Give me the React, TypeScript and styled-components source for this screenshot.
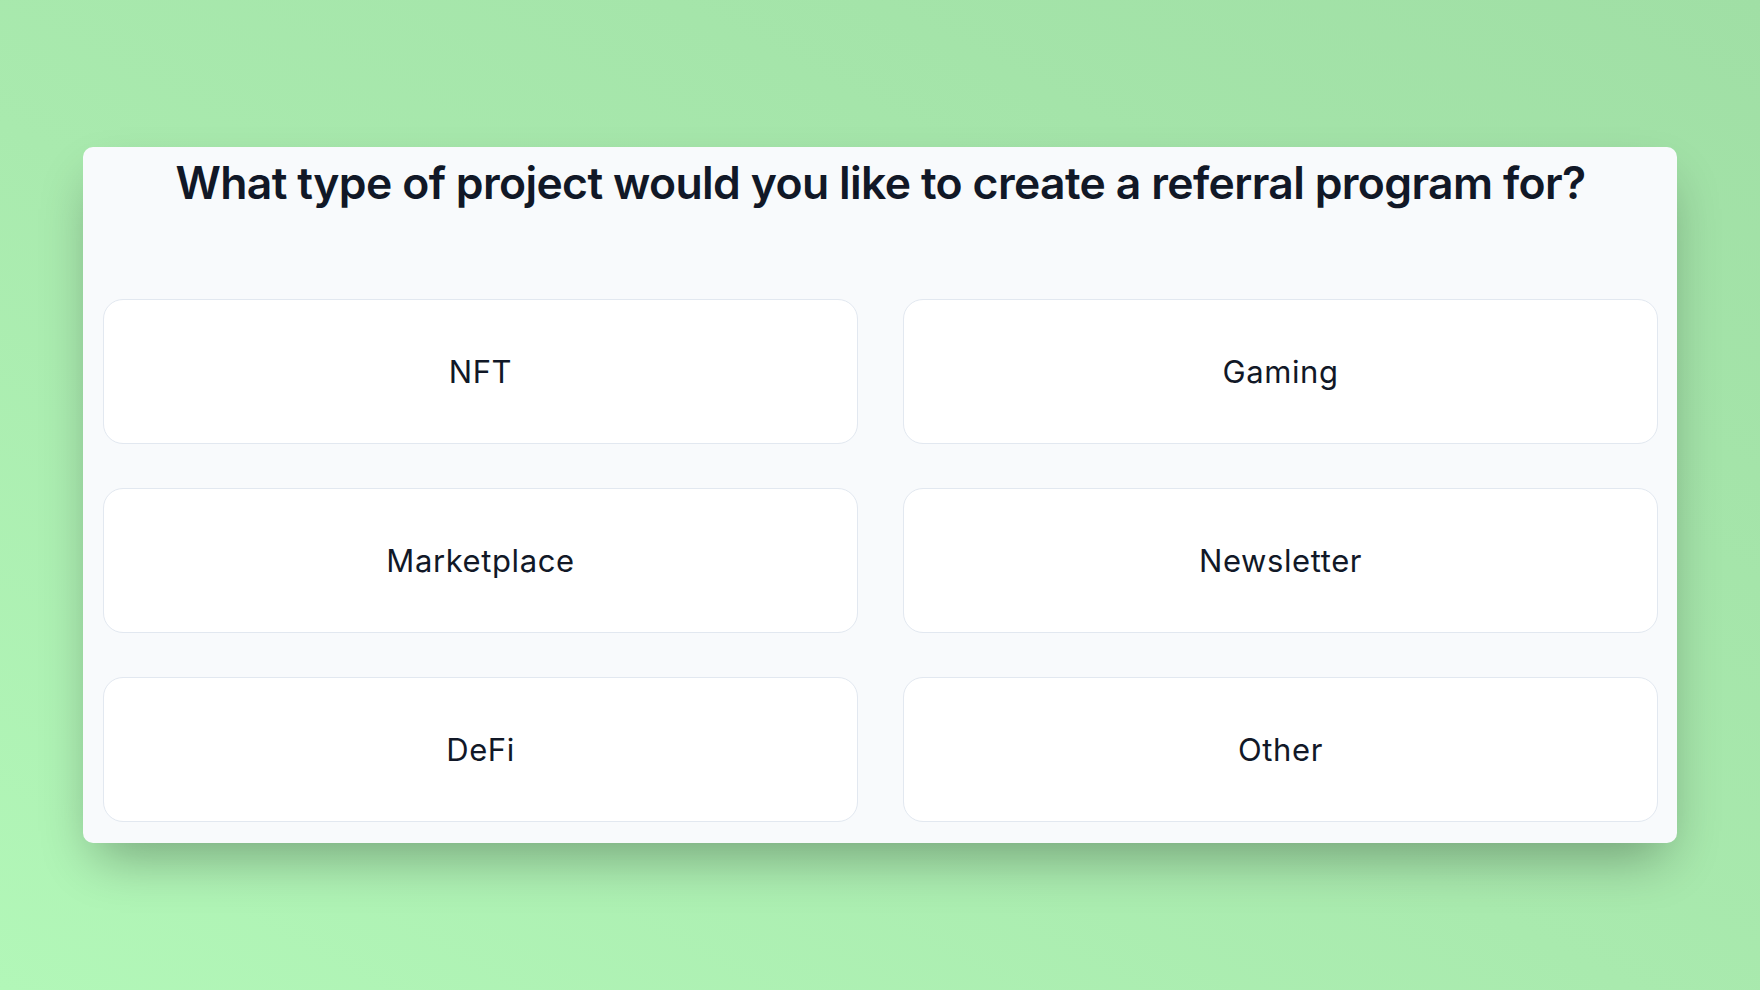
import React from "react";
import styled, { createGlobalStyle } from "styled-components";

const Global = createGlobalStyle`
  html, body { margin: 0; padding: 0; height: 100%; }
  body { font-family: Inter, "Noto Sans", sans-serif; }
  #root { height: 100%; }
  * { box-sizing: border-box; }
`;

const Page = styled.div`
  width: 1760px;
  height: 990px;
  background: linear-gradient(28deg, #b2f7b8 0%, #a9eaae 45%, #a0dfa5 100%);
  padding: 147px 83px 0 83px;
`;

const Card = styled.div`
  width: 1594px;
  height: 696px;
  background: #f8fafc;
  border-radius: 10px;
  box-shadow: 0 25px 50px -12px rgba(0, 0, 0, 0.32);
  padding: 12px 19px 20px 20px;
  display: flex;
  flex-direction: column;
`;

const Title = styled.h1`
  margin: 0 0 92px 0;
  font-family: Inter, "Noto Sans", sans-serif;
  font-size: 44.5px;
  line-height: 48px;
  font-weight: 600;
  color: #111827;
  text-align: center;
  letter-spacing: -0.65px;
`;

const Grid = styled.div`
  display: grid;
  grid-template-columns: 755px 755px;
  grid-auto-rows: 145px;
  column-gap: 45px;
  row-gap: 44px;
`;

const Option = styled.button`
  background: #ffffff;
  border: 1px solid #e2e8f0;
  border-radius: 20px;
  display: flex;
  align-items: center;
  justify-content: center;
  font-family: Inter, "Noto Sans", sans-serif;
  font-size: 31px;
  font-weight: 400;
  letter-spacing: 0.6px;
  color: #111827;
  cursor: pointer;
  padding: 0;
`;

const options = ["NFT", "Gaming", "Marketplace", "Newsletter", "DeFi", "Other"];

export default function App() {
  return (
    <>
      <Global />
      <Page>
        <Card>
          <Title>What type of project would you like to create a referral program for?</Title>
          <Grid>
            {options.map((o) => (
              <Option key={o}>{o}</Option>
            ))}
          </Grid>
        </Card>
      </Page>
    </>
  );
}
